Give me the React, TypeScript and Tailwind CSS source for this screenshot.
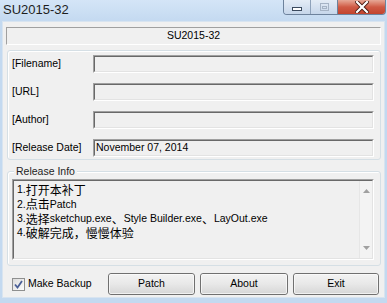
import React from "react";

const font = { fontFamily: '"Liberation Sans", Arial, "Noto Sans CJK SC", sans-serif' };

function Field({ label, value }: { label: string; value?: string }) {
  return (
    <div className="flex items-center h-[18px]">
      <span className="w-[81px] shrink-0 text-[10.5px] text-black">{label}</span>
      <div className="flex-1 h-[18px] border border-t-[#a0a0a0] border-l-[#a0a0a0] border-r-white border-b-white">
        <div className="h-full border border-t-[#696969] border-l-[#696969] border-r-[#e3e3e3] border-b-[#e3e3e3] bg-[#f0f0f0] flex items-center px-[1px] text-[10.5px] text-black">
          {value}
        </div>
      </div>
    </div>
  );
}

function Btn({ label, w }: { label: string; w: string }) {
  return (
    <button
      className={`${w} h-[22px] rounded-[3px] border border-[#707070] bg-gradient-to-b from-[#f3f3f3] via-[#e8e8e8] to-[#d6d6d6] text-[10.5px] text-black`}
    >
      <div className="h-full rounded-[2px] border border-[#fcfcfc]/70 flex items-center justify-center">{label}</div>
    </button>
  );
}

function Cjk({ children }: { children: React.ReactNode }) {
  return (
    <span className="text-[12px] leading-[14px]" style={{ fontFamily: '"Noto Sans CJK SC", sans-serif' }}>
      {children}
    </span>
  );
}

function Line({ children }: { children: React.ReactNode }) {
  return <div className="h-[14.3px] flex items-center whitespace-nowrap">{children}</div>;
}

export default function App() {
  return (
    <div className="w-[387px] h-[303px] bg-[#c3d9f0] flex flex-col overflow-hidden" style={font}>
      {/* Title bar */}
      <div className="h-[22px] shrink-0 flex justify-between bg-gradient-to-b from-[#d4e5f7] to-[#c3d9f0]">
        <span className="pl-[3px] pt-[2px] text-[13px] text-[#1e1e1e] leading-[16px]">SU2015-32</span>
        <div className="flex h-[15px] mr-[1px] rounded-b-[4px] border border-t-0 border-[#6d829c] overflow-hidden">
          <div className="w-[27px] flex items-center justify-center bg-gradient-to-b from-[#e4ecf6] to-[#c6d6ea] border-r border-[#8fa2ba]">
            <div className="w-[10px] h-[4px] mt-[4px] bg-white border border-[#3b4a5e]" />
          </div>
          <div className="w-[27px] flex items-center justify-center bg-gradient-to-b from-[#e4ecf6] to-[#c6d6ea] border-r border-[#6d829c]">
            <div className="w-[9px] h-[8px] border border-[#a5b3c5] flex items-end justify-center">
              <div className="w-[5px] h-[3px] border border-[#a5b3c5] mb-[1px]" />
            </div>
          </div>
          <div className="w-[47px] flex items-center justify-center bg-gradient-to-b from-[#e6a897] via-[#cf5a45] to-[#c2432d]">
            <svg width="14" height="12" viewBox="0 0 14 12">
              <path d="M2 1 L12 11 M12 1 L2 11" stroke="#4a1a12" strokeWidth="4" strokeLinecap="square" />
              <path d="M2 1 L12 11 M12 1 L2 11" stroke="#ffffff" strokeWidth="2.2" strokeLinecap="square" />
            </svg>
          </div>
        </div>
      </div>

      {/* Client area */}
      <div className="mx-[3px] h-[275px] bg-[#f0f0f0] flex flex-col shadow-[0_0_0_1px_#d8e4f0]">
        <div className="mt-[5px] mx-[3px] h-[18px] border border-t-[#a0a0a0] border-l-[#a0a0a0] border-r-white border-b-white flex items-center justify-center text-[10.5px] text-black">
          SU2015-32
        </div>

        <div className="mt-[5px] ml-[4px] mr-[3px] h-[110px] rounded-[3px] border border-[#d5dfe5] shadow-[inset_1px_1px_0_#ffffff] pt-[4px] pl-[4px] pr-[6px] flex flex-col gap-[10px]">
          <Field label="[Filename]" />
          <Field label="[URL]" />
          <Field label="[Author]" />
          <Field label="[Release Date]" value="November 07, 2014" />
        </div>

        <div className="relative mt-[11px] ml-[4px] mr-[3px] h-[95px] rounded-[3px] border border-[#d5dfe5] shadow-[inset_1px_1px_0_#ffffff] pt-[7px] pl-[4px] pr-[6px]">
          <span className="absolute left-[6px] top-[-8px] px-[2px] bg-[#f0f0f0] text-[10.5px] text-[#1e1e1e] leading-[14px]">Release Info</span>
          <div className="h-[81px] border border-t-[#a0a0a0] border-l-[#a0a0a0] border-r-white border-b-white">
            <div className="h-full border border-t-[#696969] border-l-[#696969] border-r-[#e3e3e3] border-b-[#e3e3e3] bg-[#f0f0f0] flex">
              <div className="flex-1 pl-[3px] pt-[2px] text-[10.5px] text-black">
                <Line>1.<Cjk>打开本补丁</Cjk></Line>
                <Line>2.<Cjk>点击</Cjk>Patch</Line>
                <Line>3.<Cjk>选择</Cjk>sketchup.exe<Cjk>、</Cjk>Style Builder.exe<Cjk>、</Cjk>LayOut.exe</Line>
                <Line>4.<Cjk>破解完成，慢慢体验</Cjk></Line>
              </div>
              <div className="w-[13px] flex flex-col justify-between items-center border-l border-[#e6e6e6] bg-[#f3f3f3] py-[8px]">
                <svg width="7" height="4" viewBox="0 0 7 4"><path d="M0 4 L3.5 0 L7 4 Z" fill="#a0a0a0" /></svg>
                <svg width="7" height="4" viewBox="0 0 7 4"><path d="M0 0 L3.5 4 L7 0 Z" fill="#a0a0a0" /></svg>
              </div>
            </div>
          </div>
        </div>

        <div className="mt-[7px] flex items-center h-[22px] pl-[9px] pr-[5px]">
          <div className="w-[13px] h-[13px] border border-[#8e8f8f] bg-gradient-to-br from-[#dcdcdc] to-[#fdfdfd] flex items-center justify-center">
            <svg width="9" height="9" viewBox="0 0 9 9">
              <path d="M1 4.5 L3.5 7.5 L8 1" stroke="#4a5f97" strokeWidth="1.8" fill="none" />
            </svg>
          </div>
          <span className="ml-[3px] text-[10.5px] text-black">Make Backup</span>
          <div className="ml-auto flex gap-[5px]">
            <Btn label="Patch" w="w-[87px]" />
            <Btn label="About" w="w-[88px]" />
            <Btn label="Exit" w="w-[86px]" />
          </div>
        </div>
      </div>
    </div>
  );
}
